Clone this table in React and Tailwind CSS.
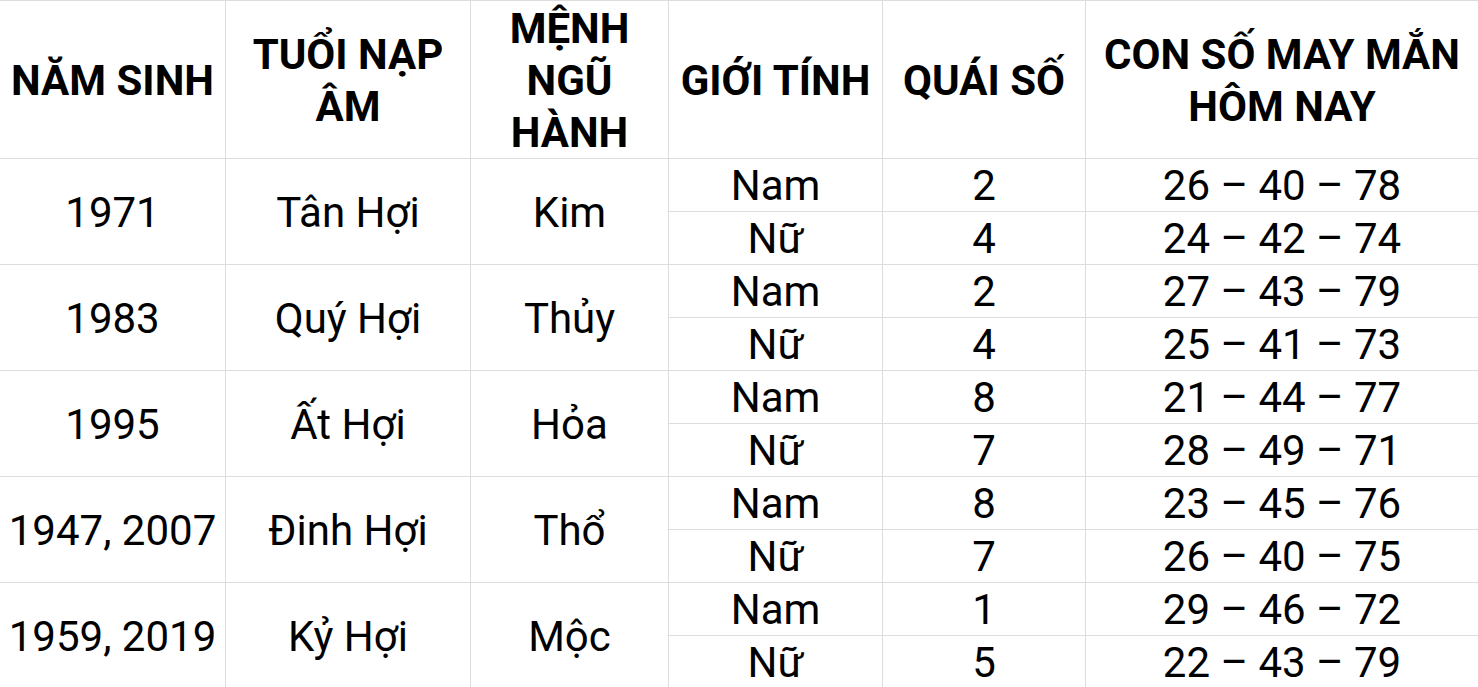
import React from 'react';

const groups = [
  { year: '1971', tuoi: 'Tân Hợi', menh: 'Kim', rows: [['Nam', '2', '26 – 40 – 78'], ['Nữ', '4', '24 – 42 – 74']] },
  { year: '1983', tuoi: 'Quý Hợi', menh: 'Thủy', rows: [['Nam', '2', '27 – 43 – 79'], ['Nữ', '4', '25 – 41 – 73']] },
  { year: '1995', tuoi: 'Ất Hợi', menh: 'Hỏa', rows: [['Nam', '8', '21 – 44 – 77'], ['Nữ', '7', '28 – 49 – 71']] },
  { year: '1947, 2007', tuoi: 'Đinh Hợi', menh: 'Thổ', rows: [['Nam', '8', '23 – 45 – 76'], ['Nữ', '7', '26 – 40 – 75']] },
  { year: '1959, 2019', tuoi: 'Kỷ Hợi', menh: 'Mộc', rows: [['Nam', '1', '29 – 46 – 72'], ['Nữ', '5', '22 – 43 – 79']] },
];

const headers = ['NĂM SINH', 'TUỔI NẠP ÂM', 'MỆNH NGŨ HÀNH', 'GIỚI TÍNH', 'QUÁI SỐ', 'CON SỐ MAY MẮN HÔM NAY'];

const cell = 'flex items-center justify-center text-center border-b border-[#dddddd]';
const body = 'text-[42px] leading-none pt-[2px]';

const App = () => {
  return (
    <div className="w-[1478px] h-[687px] overflow-hidden bg-white text-black font-['Roboto',sans-serif]">
      <div className="grid grid-cols-[226px_245px_198px_214px_203px_392px] grid-rows-[158px_repeat(10,53px)] border-t border-[#dddddd]">
        {headers.map((h, i) => (
          <div
            key={h}
            className={`${cell} px-2 pt-[2px] text-[42px] leading-[52px] font-bold ${i < 5 ? 'border-r' : ''}`}
          >
            {h}
          </div>
        ))}
        {groups.map((g) => (
          <React.Fragment key={g.year}>
            <div className={`${cell} ${body} row-span-2 border-r`}>{g.year}</div>
            <div className={`${cell} ${body} row-span-2 border-r`}>{g.tuoi}</div>
            <div className={`${cell} ${body} row-span-2 border-r`}>{g.menh}</div>
            {g.rows.map((r, j) => (
              <React.Fragment key={j}>
                <div className={`${cell} ${body} border-r`}>{r[0]}</div>
                <div className={`${cell} ${body} border-r`}>{r[1]}</div>
                <div className={`${cell} ${body}`}>{r[2]}</div>
              </React.Fragment>
            ))}
          </React.Fragment>
        ))}
      </div>
    </div>
  );
};

export default App;
